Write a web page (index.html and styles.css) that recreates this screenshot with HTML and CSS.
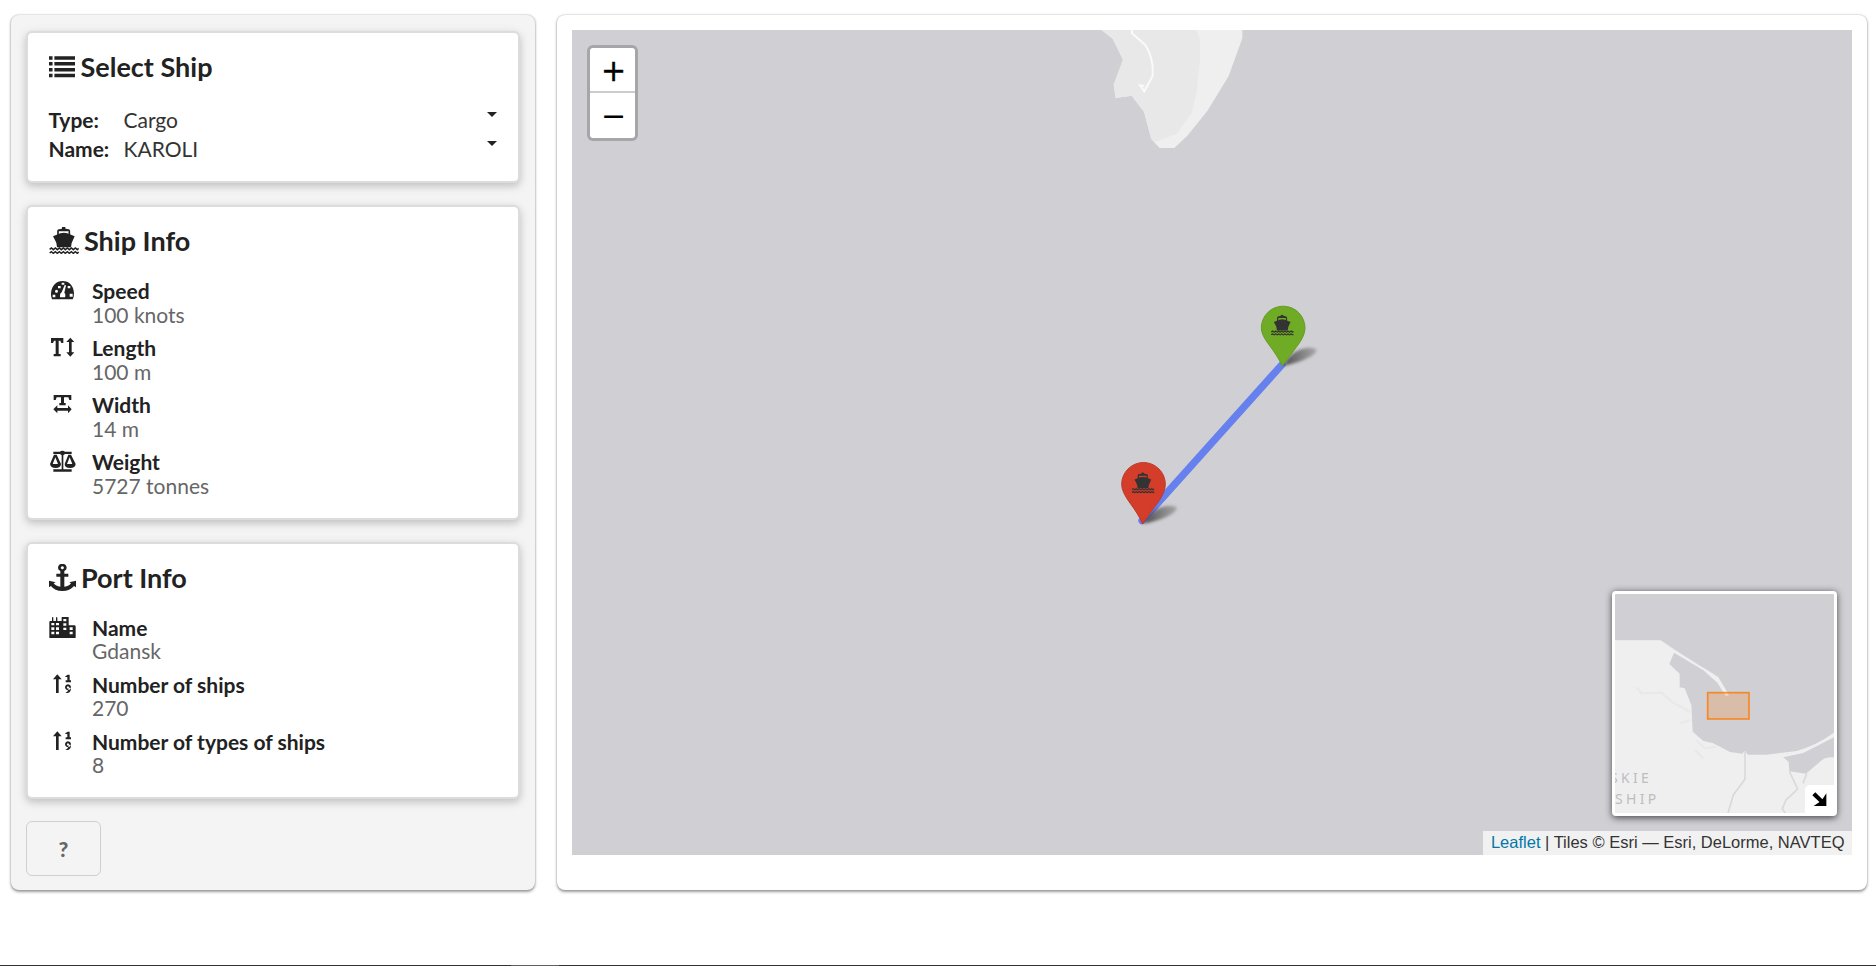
FILE: index.html
```html
<!DOCTYPE html>
<html lang="en">
<head>
<meta charset="utf-8">
<title>Ships</title>
<link rel="stylesheet" href="styles.css">
</head>
<body>
<svg class="defs" width="0" height="0">
  <symbol id="ship" viewBox="0 0 88 81">
    <path d="M38 0h10v6H38z"/>
    <path d="M26 24V12q0-3 3-3h28q3 0 3 3v12" fill="none" stroke="currentColor" stroke-width="5"/>
    <path d="M27 9l9-4h15l9 4-3 4H29z"/>
    <path d="M11 28L33 19q11-3 21 0l22 9-5 11q-6 9-6 22H23q0-13-6-22z"/>
    <path d="M1 67l5-4 6 5 6-5 6 5 6-5 6 5 6-5 6 5 6-5 6 5 6-5 6 5 6-5 6 5 4-4M1 78l5-4 6 5 6-5 6 5 6-5 6 5 6-5 6 5 6-5 6 5 6-5 6 5 6-5 6 5 4-4" fill="none" stroke="currentColor" stroke-width="4.500"/>
  </symbol>
  <symbol id="sort" viewBox="56 352 81 66">
    <path d="M81 356l13 15H68zM77 368h8v44h-8zM105 362l7-5h6v17h4v6h-16v-6h5v-10h-6z"/>
    <path d="M113 386a9 9 0 1 0 .1 0zM113 392a3.500 3.500 0 1 1-.1 0zM116 396h6q1 11-9 16h-8q8-4 9-10z" fill-rule="evenodd"/>
  </symbol>
</svg>
<main class="page">
  <aside class="panel sidebar">
    <section class="card">
      <h3 class="title">
        <svg class="icon-list" viewBox="0 0 27 27"><path d="M0 3h3.600v3.500H0zM5.500 3H27v3.500H5.500zM0 9h3.600v3.500H0zM5.500 9H27v3.500H5.500zM0 15h3.600v3.500H0zM5.500 15H27v3.500H5.500zM0 21h3.600v3.500H0zM5.500 21H27v3.500H5.500z"/></svg>
        Select Ship
      </h3>
      <div class="field"><b>Type:</b><span>Cargo</span><i class="caret"></i></div>
      <div class="field"><b>Name:</b><span>KAROLI</span><i class="caret"></i></div>
    </section>
    <section class="card">
      <h3 class="title"><svg class="icon-ship"><use href="#ship"/></svg>Ship Info</h3>
      <ul class="items">
        <li class="item">
          <svg class="icon" viewBox="56 192 81 66"><path fill-rule="evenodd" d="M65 253q-4-9-3-18C64 211 78 198 97 198s33 13 34 37q0 11-4 18zM74 229a4.500 4.500 0 1 0 9 0a4.500 4.500 0 1 0-9 0zM67 239h8v8h-8zM83 213h8v7h-8zM94 203h8v6h-8zM112 213h8v7h-8zM118 236h9v9h-9zM103 210l4 1-5 22q4 3 3 10l-1 4H89v-7q1-6 5-8z"/></svg>
          <div><b>Speed</b><span>100 knots</span></div>
        </li>
        <li class="item">
          <svg class="icon" viewBox="56 363 81 66"><path d="M62 369h37v15h-6l-3-7h-5v40h6v7H70v-7h6v-40h-5l-3 7h-6zM120 368l12 13h-8v31h8l-12 13-12-13h8v-31h-8z"/></svg>
          <div><b>Length</b><span>100 m</span></div>
        </li>
        <li class="item">
          <svg class="icon" viewBox="56 534 81 66"><path d="M70 540h53v15h-6l-3-8h-13v17h5v7H87v-7h5v-17H79l-3 8h-6zM69 583l12-12v8h32v-8l11 12-11 12v-8H81v8z"/></svg>
          <div><b>Width</b><span>14 m</span></div>
        </li>
        <li class="item">
          <svg class="icon" viewBox="56 705 81 66"><path fill-rule="evenodd" d="M69 710h20q2-3 7-3t8 3h20v7h-20l-5 4v42h25v7H69v-7h25v-42l-5-4H69zM71 719h8l13 28q-1 12-16 12t-17-12zM75 727l-8 20h16zM114 719h8l14 28q-1 12-17 12t-16-12zM118 727l-8 20h16z"/></svg>
          <div><b>Weight</b><span>5727 tonnes</span></div>
        </li>
      </ul>
    </section>
    <section class="card">
      <h3 class="title">
        <svg class="icon-anchor" viewBox="56 26 81 81"><path fill-rule="evenodd" d="M96 26a11 11 0 0 1 6 21v8h12v9h-12v30q15-1 20-10l-5-3 20-5v20l-6-4q-12 15-35 15t-34-15l-7 4V76l21 5-6 3q6 9 20 10V64H78v-9h12v-8a11 11 0 0 1 6-21zM96 33a4.500 4.500 0 1 0 .1 0z"/></svg>
        Port Info
      </h3>
      <ul class="items">
        <li class="item">
          <svg class="icon" viewBox="56 179 81 66"><path fill-rule="evenodd" d="M57 197q0-3 3-3h5v-11h4v11h8v-11h4v11h13v-12h21v25h17q4 0 4 4v33q0 2-3 2H60q-3 0-3-3zM63 200v7h9v-7zM77 200v7h9v-7zM63 213v8h9v-8zM77 213v8h9v-8zM63 226v8h9v-8zM77 226v8h9v-8zM99 188v7h9v-7zM99 201v7h9v-7zM99 214v7h9v-7zM118 213v8h9v-8zM118 226v8h9v-8z"/></svg>
          <div><b>Name</b><span>Gdansk</span></div>
        </li>
        <li class="item"><svg class="icon"><use href="#sort"/></svg><div><b>Number of ships</b><span>270</span></div></li>
        <li class="item"><svg class="icon"><use href="#sort"/></svg><div><b>Number of types of ships</b><span>8</span></div></li>
      </ul>
    </section>
    <button class="help">?</button>
  </aside>
  <section class="panel content">
    <div class="map">
      <svg class="layer" viewBox="572 30 1280 825">
        <defs>
          <filter id="soft" x="-30%" y="-50%" width="160%" height="200%"><feGaussianBlur stdDeviation="5"/></filter>
          <linearGradient id="shade" x1="0" x2="1"><stop offset="0" stop-color="#333" stop-opacity=".85"/><stop offset="1" stop-color="#555" stop-opacity=".35"/></linearGradient>
        </defs>
        <g transform="translate(1080 10) scale(.33333)">
          <path fill="#efefef" d="M62 58L98 86 129 149 101 224 107 264 155 257 192 305 214 388 239 414H283L322 377 382 303 446 198 487 85V58z"/>
          <path fill="#e8e8e8" d="M62 58L98 86 129 149 101 224 107 264 155 257 192 305 214 388 226 396 290 371 335 310 350 245 360 150V90L348 58z"/>
          <path fill="none" stroke="#fafafa" stroke-width="6" d="M156 58V70L196 105Q213 130 218 170V198L193 244 180 226 193 228"/>
        </g>
        <g transform="translate(1100 290) scale(.33333)">
          <path stroke="#6680ee" stroke-width="22" stroke-linecap="round" d="M126 692L546 224"/>
          <path class="pin-shadow" d="M129 702Q150 664 180 653 214 642 229 652 236 660 210 675 180 692 129 702z"/>
          <path fill="#d33d29" stroke="#bb3a2a" stroke-width="3" d="M128 702Q115 672 87 635 65 604 65 583A65 65 0 0 1 196 583Q196 607 172 640 148 670 128 702z"/>
          <use href="#ship" class="pin-ship" x="95" y="547" width="68" height="63"/>
          <path class="pin-shadow" d="M548 228Q569 190 599 179 633 168 648 178 655 186 629 201 599 218 548 228z"/>
          <path fill="#70ab25" stroke="#649c23" stroke-width="3" d="M547 228Q534 200 506 163 484 134 484 114A65 65 0 0 1 615 114Q615 138 591 169 567 200 547 228z"/>
          <use href="#ship" class="pin-ship" x="513" y="74" width="68" height="63"/>
        </g>
      </svg>
      <div class="zoom"><a>+</a><a>−</a></div>
      <div class="minimap">
        <svg viewBox="75 72 657 657">
          <path fill="#efefef" d="M75 211H212L252 238 330 287Q365 307 385 322L417 375 408 379 382 338 340 301 252 248 238 282 269 311V352L284 355 304 405 308 485 340 513 370 520 420 546 456 551 465 543 474 554H530L620 543Q680 525 732 488V729H75z"/>
          <path fill="#d0cfd4" d="M580 562L640 549 732 502V562Q705 560 690 575L648 611 598 604 596 576z"/>
          <g fill="none" stroke="#d9d9dc" stroke-width="5">
            <path d="M465 545V628L430 675 414 729M598 604L623 657 588 690 577 716 586 729M650 611L639 640"/>
            <path stroke="#e9e9ea" stroke-width="7" d="M140 352L155 370 215 368 245 395 300 425M270 460L300 450M318 510L345 535 380 530M340 565L315 540"/>
          </g>
          <g class="place"><text x="60" y="640">SKIE</text><text x="75" y="703">SHIP</text></g>
          <rect x="353" y="368" width="124" height="79" fill="#ff7800" fill-opacity=".2" stroke="#ff7800" stroke-opacity=".8" stroke-width="5"/>
        </svg>
        <div class="toggle"><svg viewBox="667 666 46 46"><path d="M668 676L677 667 699 688 711 670V709H672L690 697z"/></svg></div>
      </div>
      <div class="attribution"><a>Leaflet</a> | Tiles © Esri — Esri, DeLorme, NAVTEQ</div>
    </div>
  </section>
</main>
<footer class="edge"></footer>
</body>
</html>
```
FILE: styles.css
```css
* { box-sizing: border-box; }
body {
  margin: 0;
  height: 966px;
  overflow: hidden;
  display: flex;
  flex-direction: column;
  justify-content: space-between;
  background: #fff;
  color: #222;
  font: 21px Lato, sans-serif;
}
.defs { position: absolute; }
svg { fill: currentColor; flex: none; display: block; }
.page { display: flex; gap: 22px; padding: 15px 9px 0 11px; }
.panel {
  height: 875px;
  border-radius: 8px;
  box-shadow: 0 1.5px 3px rgba(0,0,0,.38), 0 0 2px rgba(0,0,0,.2);
}
.sidebar {
  width: 524px;
  padding: 15.500px 15px 0;
  background: #f4f4f4;
  display: flex;
  flex-direction: column;
  gap: 22px;
}
.content { flex: 1; padding: 15px 15px 0; background: #fff; }
.card {
  padding: 16px 20.500px 18.500px;
  border: 2px solid #dcdcdd;
  border-radius: 6px;
  background: #fff;
  box-shadow: 0 3px 6px rgba(34,36,38,.14), 0 3px 12px rgba(34,36,38,.12);
}
.title {
  display: flex;
  align-items: center;
  gap: 5.500px;
  height: 35px;
  margin: 0 0 21px;
  font-size: 27px;
  font-weight: 700;
  line-height: 33px;
}
.icon-list, .icon-anchor { width: 27px; height: 27px; }
.icon-list { width: 26.500px; }
.icon-ship { width: 30px; height: 27px; }
.field { display: flex; height: 29px; line-height: 29px; }
.field b { width: 75px; }
.field span { flex: 1; color: #333; }
.caret {
  width: 0;
  height: 0;
  margin: 7px 1px 0 0;
  border: 5.500px solid transparent;
  border-top-color: #222;
  border-bottom: 0;
}
.items { display: flex; flex-direction: column; gap: 8px; margin: 0; padding: 0; list-style: none; }
.item { display: flex; gap: 16.500px; height: 49px; line-height: 24.500px; }
.item b, .item span { display: block; }
.item span { margin-top: -1px; color: #666; }
.icon { width: 27px; height: 22px; }
.help {
  width: 75px;
  height: 55px;
  border: 1px solid #d0d0d1;
  border-radius: 6px;
  background: none;
  color: #666;
  font: 900 21px Lato, sans-serif;
}
.map { position: relative; height: 825px; overflow: hidden; background: #d0cfd4; }
.layer { position: absolute; inset: 0; width: 100%; height: 100%; }
.pin-shadow { fill: url(#shade); filter: url(#soft); }
.pin-ship { fill: #333; color: #333; }
.zoom {
  position: absolute;
  left: 15px;
  top: 15px;
  width: 51px;
  border: 3px solid rgba(0,0,0,.2);
  border-radius: 6px;
  background: #fff;
  background-clip: padding-box;
}
.zoom a {
  display: block;
  height: 45px;
  padding-left: 2px;
  font: 30px/45px "DejaVu Sans", sans-serif;
  color: #000;
  text-align: center;
}
.zoom a:first-child { border-bottom: 2px solid #ccc; -webkit-text-stroke: .4px #000; }
.minimap {
  position: absolute;
  right: 15px;
  bottom: 39px;
  width: 225px;
  height: 225px;
  border: 3px solid #fff;
  border-radius: 4px;
  box-shadow: 0 1.5px 7px rgba(0,0,0,.65);
  background: #d0cfd4;
}
.place { fill: #bdbdc0; font: 42px "Noto Sans", sans-serif; letter-spacing: 10px; }
.toggle {
  position: absolute;
  right: 0;
  bottom: 0;
  width: 29px;
  height: 28px;
  padding: 7px;
  border-radius: 5px 0 0;
  background: #fff;
  color: #000;
}
.toggle svg { width: 15px; height: 15px; }
.attribution {
  position: absolute;
  right: 0;
  bottom: 0;
  height: 24px;
  padding: 0 7.500px;
  background: rgba(255,255,255,.7);
  color: #333;
  font: 16.500px/23px "Liberation Sans", sans-serif;
  white-space: nowrap;
}
.attribution a { color: #0078a8; }
.edge {
  height: 1px;
  background: linear-gradient(90deg, #2c343a 511px, #5a6066 511px 559px, #2c343a 559px);
}
```
